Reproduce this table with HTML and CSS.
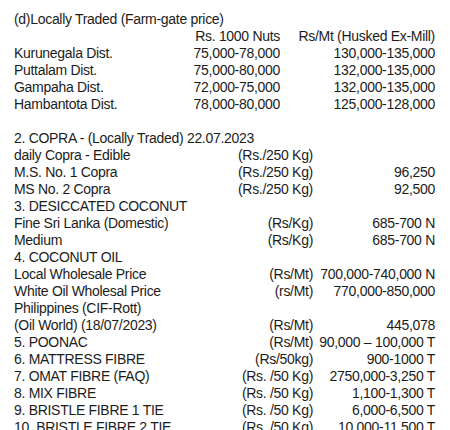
FILE: index.html
```html
<!DOCTYPE html>
<html>
<head>
<meta charset="utf-8">
<link rel="stylesheet" href="styles.css">
</head>
<body>
<div class="page">
  <div class="line">(d)Locally Traded (Farm-gate price)</div>
  <div class="grid1">
    <div></div><div class="r">Rs. 1000 Nuts</div><div class="r">Rs/Mt (Husked Ex-Mill)</div>
    <div>Kurunegala Dist.</div><div class="r">75,000-78,000</div><div class="r">130,000-135,000</div>
    <div>Puttalam Dist.</div><div class="r">75,000-80,000</div><div class="r">132,000-135,000</div>
    <div>Gampaha Dist.</div><div class="r">72,000-75,000</div><div class="r">132,000-135,000</div>
    <div>Hambantota Dist.</div><div class="r">78,000-80,000</div><div class="r">125,000-128,000</div>
  </div>
  <div class="line">&nbsp;</div>
  <div class="line">2. COPRA - (Locally Traded) 22.07.2023</div>
  <div class="grid2">
    <div>daily Copra - Edible</div><div class="r">(Rs./250 Kg)</div><div class="r"></div>
    <div>M.S. No. 1 Copra</div><div class="r">(Rs./250 Kg)</div><div class="r">96,250</div>
    <div>MS No. 2 Copra</div><div class="r">(Rs./250 Kg)</div><div class="r">92,500</div>
    <div class="span">3. DESICCATED COCONUT</div>
    <div>Fine Sri Lanka (Domestic)</div><div class="r">(Rs/Kg)</div><div class="r">685-700 N</div>
    <div>Medium</div><div class="r">(Rs/Kg)</div><div class="r">685-700 N</div>
    <div class="span">4. COCONUT OIL</div>
    <div>Local Wholesale Price</div><div class="r">(Rs/Mt)</div><div class="r">700,000-740,000 N</div>
    <div>White Oil Wholesal Price</div><div class="r">(rs/Mt)</div><div class="r">770,000-850,000</div>
    <div class="span">Philippines (CIF-Rott)</div>
    <div>(Oil World) (18/07/2023)</div><div class="r">(Rs/Mt)</div><div class="r">445,078</div>
    <div>5. POONAC</div><div class="r">(Rs/Mt)</div><div class="r">90,000 – 100,000 T</div>
    <div>6. MATTRESS FIBRE</div><div class="r">(Rs/50kg)</div><div class="r">900-1000 T</div>
    <div>7. OMAT FIBRE (FAQ)</div><div class="r">(Rs. /50 Kg)</div><div class="r">2750,000-3,250 T</div>
    <div>8. MIX FIBRE</div><div class="r">(Rs. /50 Kg)</div><div class="r">1,100-1,300 T</div>
    <div>9. BRISTLE FIBRE 1 TIE</div><div class="r">(Rs. /50 Kg)</div><div class="r">6,000-6,500 T</div>
    <div>10. BRISTLE FIBRE 2 TIE</div><div class="r">(Rs. /50 Kg)</div><div class="r">10,000-11,500 T</div>
  </div>
</div>
</body>
</html>
```

FILE: styles.css
```css
html, body {
  margin: 0;
  padding: 0;
  background: #ffffff;
}
.page {
  font-family: "Liberation Sans", Arial, sans-serif;
  font-size: 14px;
  line-height: 17px;
  letter-spacing: -0.3px;
  color: #1c1c1c;
  padding: 11px 0 0 14px;
  width: 422px;
  white-space: nowrap;
}
.grid1 {
  display: grid;
  grid-template-columns: 160px 106px 155px;
}
.grid2 {
  display: grid;
  grid-template-columns: 200px 99px 122px;
}
.r {
  text-align: right;
}
.span {
  grid-column: 1 / -1;
}
```
